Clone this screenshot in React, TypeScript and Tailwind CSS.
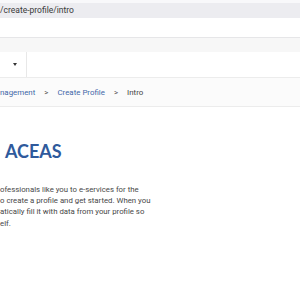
export default function App() {
  return (
    <div className="w-[300px] h-[300px] overflow-hidden bg-white font-['Roboto',sans-serif]">
      {/* Browser address bar */}
      <div className="h-[3px] bg-[#f8f8fa]" />
      <div className="h-[15px] bg-[#ececf0] flex items-center whitespace-nowrap text-[8.5px] text-[#3a3a3a]">
        /create-profile/intro
      </div>
      <div className="h-[20px] bg-white border-b border-[#e6e6e8]" />

      {/* Header strip */}
      <div className="h-[14px] bg-[#f7f7f7]" />

      {/* Nav row */}
      <div className="h-[26px] flex border-b border-[#ececec]">
        <div className="w-[27px] border-r border-[#e8e8e8] flex items-start justify-center pt-[11px] pl-[3px]">
          <span className="block w-0 h-0 border-l-[2.5px] border-r-[2.5px] border-t-[3px] border-l-transparent border-r-transparent border-t-[#333]" />
        </div>
      </div>

      {/* Breadcrumb */}
      <div className="h-[29px] bg-[#fbfbfb] border-b border-[#ececec] flex items-center gap-[9px] whitespace-nowrap text-[7.9px] pt-[1px]">
        <span className="text-[#3f67a8]">nagement</span>
        <span className="text-[#555]">&gt;</span>
        <span className="text-[#3f67a8]">Create Profile</span>
        <span className="text-[#555]">&gt;</span>
        <span className="text-[#444]">Intro</span>
      </div>

      {/* Content */}
      <div className="pt-[33px]">
        <h1 className="font-['Lato',sans-serif] font-bold text-[18px] leading-[22px] text-[#2f5a9c] whitespace-nowrap pl-[5px]">
          ACEAS
        </h1>
        <div className="mt-[22px] text-[7.8px] leading-[11.2px] text-[#474747] whitespace-nowrap">
          <p>ofessionals like you to e-services for the</p>
          <p>o create a profile and get started. When you</p>
          <p>atically fill it with data from your profile so</p>
          <p>elf.</p>
        </div>
      </div>
    </div>
  );
}
